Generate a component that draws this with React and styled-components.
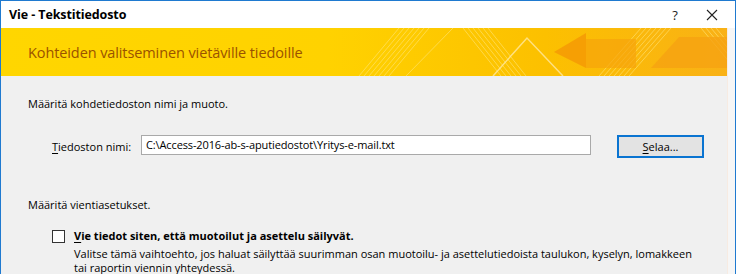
import styled, { createGlobalStyle } from 'styled-components'

const GlobalStyle = createGlobalStyle`
  html, body {
    margin: 0;
    padding: 0;
    background: #ffffff;
  }
  body {
    font-family: "Open Sans", "Noto Sans", sans-serif;
  }
`

const Window = styled.div`
  width: 736px;
  height: 274px;
  box-sizing: border-box;
  border: 1px solid #1f7ad0;
  border-bottom: none;
  display: flex;
  flex-direction: column;
  overflow: hidden;
  background: #ffffff;
`

const TitleBar = styled.div`
  height: 27px;
  flex: none;
  display: flex;
  align-items: center;
  padding-left: 8px;
  background: #ffffff;
`

const Title = styled.div`
  flex: 1;
  font-size: 12.5px;
  font-weight: 700;
  color: #000000;
  letter-spacing: -0.1px;
`

const CaptionButton = styled.div`
  width: ${({ $w }) => $w}px;
  height: 27px;
  display: flex;
  align-items: center;
  justify-content: center;
  color: #222;
  font-size: 13px;
`

const Body = styled.div`
  flex: 1;
  display: flex;
  min-height: 0;
`

const Content = styled.div`
  flex: 1;
  display: flex;
  flex-direction: column;
  background: #f0f0f0;
`

const Strip = styled.div`
  width: 7px;
  flex: none;
  background: #f6f6f6;
  border-left: 1px solid #f7ebe2;
`

const Banner = styled.div`
  position: relative;
  height: 48px;
  flex: none;
  display: flex;
  align-items: center;
  padding-left: 27px;
  background: linear-gradient(90deg, #ffd600 0%, #ffd200 45%, #fcc000 75%, #f9b116 100%);
  overflow: hidden;
`

const BannerArt = styled.svg`
  position: absolute;
  left: 0;
  top: 0;
`

const BannerTitle = styled.div`
  position: relative;
  font-size: 14.5px;
  color: #9a5200;
  letter-spacing: -0.1px;
`

const Form = styled.div`
  padding: 20px 0 0 27px;
  font-size: 11px;
  color: #000000;
`

const Heading = styled.div`
  line-height: 16px;
  height: 16px;
`

const FieldRow = styled.div`
  display: flex;
  align-items: center;
  margin-top: 22px;
  padding-left: 24px;
  height: 25px;
`

const FieldLabel = styled.div`
  width: 89px;
  flex: none;
`

const Underline = styled.span`
  text-decoration: underline;
  text-underline-offset: 2px;
`

const TextBox = styled.div`
  width: 444px;
  height: 18px;
  box-sizing: content-box;
  border: 1px solid #a9a9a9;
  background: #ffffff;
  display: flex;
  align-items: center;
  padding-left: 4px;
  margin-top: -4px;
  white-space: nowrap;
  font-size: 11px;
  letter-spacing: -0.12px;
`

const Button = styled.div`
  width: 83px;
  height: 19px;
  margin-left: 26px;
  border: 2px solid #0a74d1;
  background: #e3e3e3;
  display: flex;
  align-items: center;
  justify-content: center;
  margin-top: -1px;
`

const SecondHeading = styled(Heading)`
  margin-top: 38px;
`

const OptionRow = styled.div`
  display: flex;
  margin-top: 15px;
  padding-left: 24px;
`

const Checkbox = styled.div`
  width: 11px;
  height: 11px;
  flex: none;
  border: 1px solid #333333;
  background: #ffffff;
  margin-top: 2px;
  margin-right: 9px;
`

const OptionText = styled.div`
  display: flex;
  flex-direction: column;
`

const OptionLabel = styled.div`
  font-weight: 700;
  line-height: 16px;
  height: 16px;
`

const OptionHelp = styled.div`
  margin-top: 3px;
  line-height: 14px;
  white-space: nowrap;
`

function BannerDecor() {
  return (
    <BannerArt width="728" height="48" viewBox="0 0 728 48">
      <g stroke="#ffe985" strokeWidth="1" opacity="0.55" fill="none">
        {[0, 5, 10, 15, 20, 25, 30].map((d) => (
          <line key={d} x1={358 + d} y1="48" x2={398 + d} y2="0" />
        ))}
        <line x1="405" y1="48" x2="452" y2="0" />
        {[0, 5, 10, 15, 20, 25].map((d) => (
          <line key={`b${d}`} x1={462 + d} y1="0" x2={500 + d} y2="48" />
        ))}
        {[0, 5, 10, 15, 20, 25, 30].map((d) => (
          <line key={`c${d}`} x1={598 + d} y1="48" x2={640 + d} y2="0" />
        ))}
        {[0, 5, 10, 15].map((d) => (
          <line key={`d${d}`} x1={700 + d} y1="0" x2={740 + d} y2="48" />
        ))}
      </g>
      <polyline points="492,48 526,10 562,48" stroke="#ffe9a0" strokeWidth="1.5" fill="none" opacity="0.8" />
      <polygon points="553,24 585,5 585,40" fill="#f59a05" opacity="0.85" />
      <polygon points="585,11 635,11 635,40 585,40" fill="#f6a40c" opacity="0.7" />
      <polygon points="678,9 728,9 728,40 650,40" fill="#f6a312" opacity="0.8" />
    </BannerArt>
  )
}

export default function App() {
  return (
    <>
      <GlobalStyle />
      <Window>
        <TitleBar>
          <Title>Vie - Tekstitiedosto</Title>
          <CaptionButton $w={28}>?</CaptionButton>
          <CaptionButton $w={46}>
            <svg width="12" height="12" viewBox="0 0 12 12">
              <path d="M1 1 L11 11 M11 1 L1 11" stroke="#222" strokeWidth="1.1" />
            </svg>
          </CaptionButton>
        </TitleBar>
        <Body>
          <Content>
            <Banner>
              <BannerDecor />
              <BannerTitle>Kohteiden valitseminen vietäville tiedoille</BannerTitle>
            </Banner>
            <Form>
              <Heading>Määritä kohdetiedoston nimi ja muoto.</Heading>
              <FieldRow>
                <FieldLabel>
                  <Underline>T</Underline>iedoston nimi:
                </FieldLabel>
                <TextBox>C:\Access-2016-ab-s-aputiedostot\Yritys-e-mail.txt</TextBox>
                <Button>
                  <span>
                    <Underline>S</Underline>elaa...
                  </span>
                </Button>
              </FieldRow>
              <SecondHeading>Määritä vientiasetukset.</SecondHeading>
              <OptionRow>
                <Checkbox />
                <OptionText>
                  <OptionLabel>
                    <Underline>V</Underline>ie tiedot siten, että muotoilut ja asettelu säilyvät.
                  </OptionLabel>
                  <OptionHelp>
                    Valitse tämä vaihtoehto, jos haluat säilyttää suurimman osan muotoilu- ja asettelutiedoista taulukon, kyselyn, lomakkeen
                    <br />
                    tai raportin viennin yhteydessä.
                  </OptionHelp>
                </OptionText>
              </OptionRow>
            </Form>
          </Content>
          <Strip />
        </Body>
      </Window>
    </>
  )
}
